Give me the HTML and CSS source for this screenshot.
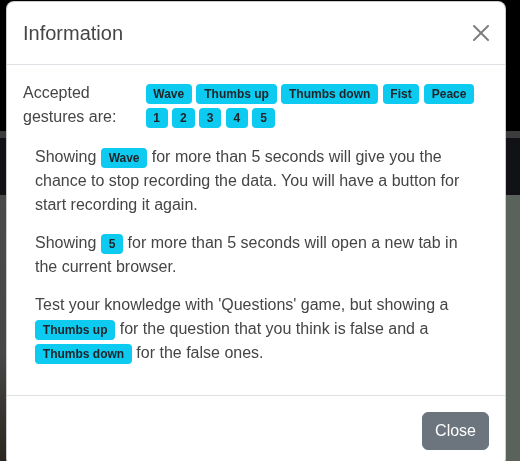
FILE: index.html
```html
<!DOCTYPE html>
<html lang="en">
<head>
<meta charset="utf-8">
<title>Information</title>
<link rel="stylesheet" href="styles.css">
</head>
<body>
<div class="page">
  <div class="topbar"></div>
  <div class="strip"></div>
  <div class="navband"></div>
  <div class="scene"></div>
</div>
<div class="modal">
  <div class="modal-header">
    <h5 class="modal-title">Information</h5>
    <button class="btn-close" type="button" aria-label="Close">
      <svg viewBox="0 0 16 16" width="16" height="16"><path d="M.293.293a1 1 0 0 1 1.414 0L8 6.586 14.293.293a1 1 0 1 1 1.414 1.414L9.414 8l6.293 6.293a1 1 0 0 1-1.414 1.414L8 9.414l-6.293 6.293a1 1 0 0 1-1.414-1.414L6.586 8 .293 1.707a1 1 0 0 1 0-1.414z"/></svg>
    </button>
  </div>
  <div class="modal-body">
    <div class="gesture-row">
      <div class="gesture-label">Accepted gestures are:</div>
      <div class="gesture-list">
        <span class="badge">Wave</span> <span class="badge">Thumbs up</span> <span class="badge">Thumbs down</span> <span class="badge">Fist</span> <span class="badge">Peace</span> <span class="badge">1</span> <span class="badge">2</span> <span class="badge">3</span> <span class="badge">4</span> <span class="badge">5</span>
      </div>
    </div>
    <div class="container">
      <p>Showing <span class="badge">Wave</span> for more than 5 seconds will give you the chance to stop recording the data. You will have a button for start recording it again.</p>
      <p>Showing <span class="badge">5</span> for more than 5 seconds will open a new tab in the current browser.</p>
      <p>Test your knowledge with 'Questions' game, but showing a <span class="badge">Thumbs up</span> for the question that you think is false and a <span class="badge">Thumbs down</span> for the false ones.</p>
    </div>
  </div>
  <div class="modal-footer">
    <button class="btn" type="button">Close</button>
  </div>
</div>
</body>
</html>
```

FILE: styles.css
```css
* { box-sizing: border-box; }
html, body { margin: 0; padding: 0; }
body {
  width: 520px;
  height: 461px;
  overflow: hidden;
  background: #000;
  font-family: "Liberation Sans", Arial, sans-serif;
  font-size: 16px;
  line-height: 1.5;
  color: #454545;
}
.page { display: flex; flex-direction: column; height: 461px; }
.topbar { height: 131px; background: #000; }
.strip { height: 7px; background: #3c3c3c; }
.navband { height: 57px; background: #101215; }
.scene {
  flex: 1;
  background:
    linear-gradient(90deg, rgba(0,0,0,0) 0 92%, #5a625c 97%),
    linear-gradient(180deg, #4a4a4a 0%, #474747 60%, #35322c 85%, #2a261f 100%);
}

.modal {
  position: fixed;
  top: 1px;
  left: 6px;
  width: 500px;
  background: #fff;
  border: 1px solid rgba(0,0,0,.2);
  border-radius: 8px;
}
.modal-header {
  display: flex;
  align-items: center;
  padding: 16px;
  border-bottom: 1px solid #dee2e6;
}
.modal-title {
  margin: 0;
  font-size: 20px;
  font-weight: 400;
  line-height: 30px;
  color: #454545;
}
.btn-close {
  margin: -8px -8px -8px auto;
  padding: 8px;
  width: 32px;
  height: 32px;
  border: 0;
  background: transparent;
  opacity: .5;
  display: flex;
}
.btn-close svg { fill: #000; }
.modal-body { padding: 16px; }
.gesture-row {
  display: flex;
  column-gap: 24px;
  margin-bottom: 16px;
}
.gesture-label { flex: 0 0 98.5px; }
.gesture-list { flex: 1; }
.container { padding: 0 12px; }
.container p { margin: 0 0 14px; }
.badge {
  display: inline-block;
  padding: .35em .65em;
  font-size: 12px;
  font-weight: 700;
  line-height: 1;
  color: #212529;
  background: #0dcaf0;
  border-radius: 4px;
  vertical-align: baseline;
  white-space: nowrap;
}
.modal-footer {
  display: flex;
  justify-content: flex-end;
  padding: 12px;
  border-top: 1px solid #dee2e6;
}
.btn {
  margin: 4px;
  padding: 6px 12px;
  font-family: inherit;
  font-size: 16px;
  line-height: 24px;
  color: #fff;
  background: #6c757d;
  border: 1px solid #6c757d;
  border-radius: 6px;
}
```
